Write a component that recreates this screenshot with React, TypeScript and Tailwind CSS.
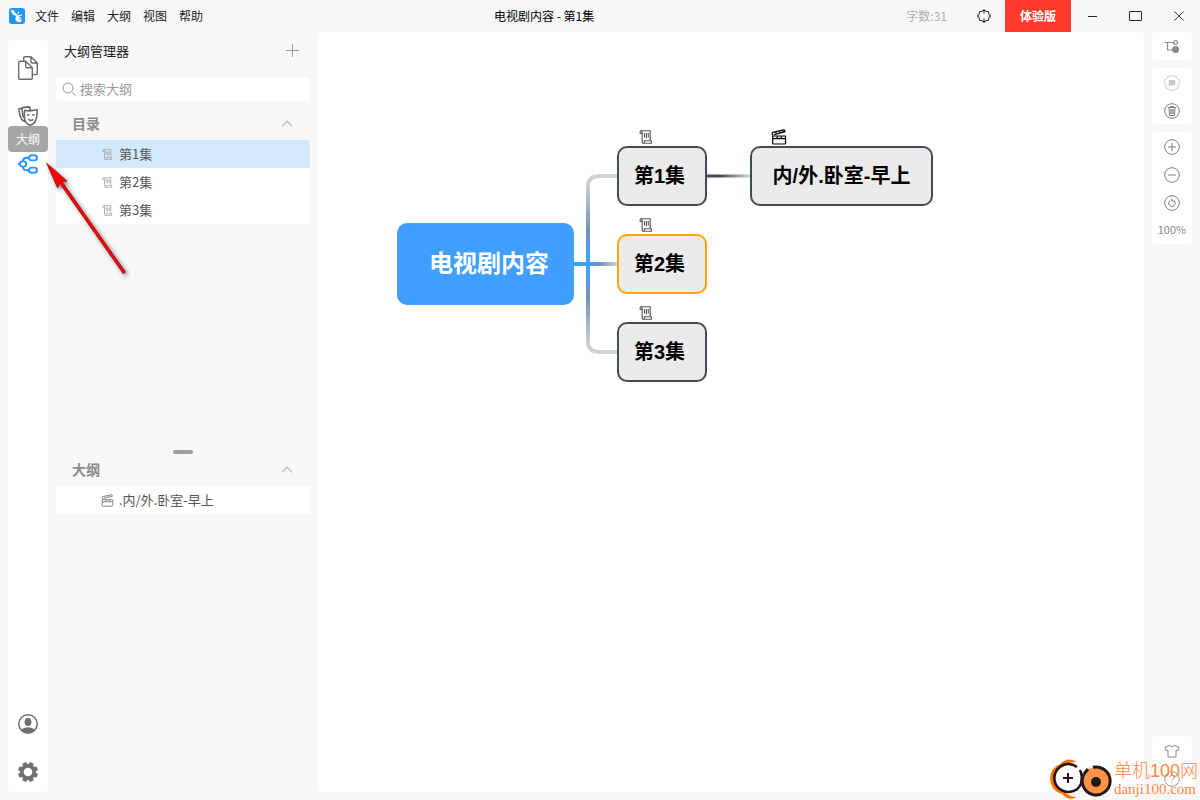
import type { ReactNode } from 'react'

type IconProps = { className?: string }

const EPISODES = ['第1集', '第2集', '第3集']

const MENUS = ['文件', '编辑', '大纲', '视图', '帮助']

function Logo() {
  return (
    <svg viewBox="0 0 16 16" className="h-4 w-4">
      <rect width="16" height="16" rx="3" fill="#2196f3" />
      <path d="M1.600 2 5 2.600 6 4.200 8.200 7.200 7 8 3.500 6.300Z" fill="#fff" />
      <path d="M9.400 3c1 .8.6 2-.4 3L8.200 7 7.600 6.400 8.800 5Z" fill="#fff" />
      <path d="M13.200 6.200c.2 1.400-1.200 1.800-3 1.900l-1.600.1.600-1Z" fill="#fff" />
      <path d="M7.400 7c2.400.8 5.300 2.800 5.200 5.200-.2 2.200-3.800 2.400-5.400.8C5.600 11.400 6.800 9 7.400 7Z" fill="#fff" />
      <path d="M9.800 9.400c1 .8 1.400 1.600 1.200 2.600" stroke="#2196f3" strokeWidth=".6" fill="none" />
    </svg>
  )
}

function ScrollIcon({ className }: IconProps) {
  return (
    <svg viewBox="0 0 14 14" className={className} fill="none" stroke="currentColor" strokeWidth="1.100">
      <path d="M3.200 3.500H1.200V1.500Q1.200.8 2 .8H11.200V10.500" />
      <path d="M2 .8Q3.200 1 3.200 2.500V12.200Q3.200 13.200 4.200 13.200H12.400V10.700H5.300V12.200Q5.300 13.200 4.200 13.200" />
      <path d="M5.500 3v4.500M7.400 3v5.500M9.300 3v4.500" />
    </svg>
  )
}

function SceneIcon({ className }: IconProps) {
  return (
    <svg viewBox="0 0 16 16" className={className} fill="none" stroke="currentColor" strokeWidth="1.200" strokeLinejoin="round">
      <path d="M1.700 7h12.800v7.200q0 .8-.8.8H2.500q-.8 0-.8-.8Z" />
      <path d="M1.700 6.500 1.200 4.200q-.1-.6.5-.8L12.800.9q.8-.1.900.5l.3 1.300-11 2.900M2 9.600h12.300" />
      <path d="m4.600 3 .8 1.500M8.200 2.200 9 3.600M11.500 1.500l.8 1.400M5.500 9.400 7 7.300M9.500 9.400 11 7.300" />
    </svg>
  )
}

function FilesIcon() {
  return (
    <svg viewBox="0 0 20 24" className="h-6 w-5" fill="none" stroke="#6b6b6b" strokeWidth="1.400" strokeLinejoin="round">
      <path d="M5.700 5V1.700Q5.700.7 6.700.7H13L19.300 7V17.500q0 1-1 1h-3M13 .7V6q0 1 1 1h5.300" />
      <path d="M1.700 5.300h6l6.600 6.500v10.500q0 1-1 1H1.700q-1 0-1-1v-16q0-1 1-1ZM7.700 5.300v5.500q0 1 1 1h5.600" />
    </svg>
  )
}

function MaskIcon() {
  return (
    <svg viewBox="0 0 20 20" className="h-5 w-5" fill="none" stroke="#6b6b6b" strokeWidth="1.600" strokeLinejoin="round" strokeLinecap="round">
      <path d="M6.800 4.200Q10 5.200 13 4.600 16.500 4.400 19.200 3.800 19.200 11 17.500 15q-2 3.600-5.500 4.200Q8.300 18.300 6.800 14 5.900 9 6.800 4.200Z" />
      <path d="M12.400 4.200 11.500.9Q6 .8.900 3 1.400 9 3.400 13q1.500 2.200 4 2.600M4 3.200l1.200 8" />
      <path d="M9.600 9h1.500M14.600 9h1.500M10.600 13.500q2 1.600 4.400.2" />
    </svg>
  )
}

function BranchIcon() {
  return (
    <svg viewBox="0 0 20 20" className="h-5 w-5" fill="none" stroke="#2b94f0" strokeWidth="1.900">
      <rect x="11" y="1.200" width="8" height="5.200" rx="2.600" />
      <rect x="11" y="13.600" width="8" height="5.200" rx="2.600" />
      <rect x="1.800" y="7.400" width="6.400" height="5.200" rx="2.600" />
      <path d="M0 10h2M5 7.400Q5 3.800 8.500 3.800H11M5 12.600Q5 16.200 8.500 16.200H11" />
    </svg>
  )
}

function UserIcon() {
  return (
    <svg viewBox="0 0 20 20" className="h-5 w-5">
      <circle cx="10" cy="10" r="9.200" fill="none" stroke="#707070" strokeWidth="1.500" />
      <ellipse cx="10" cy="8" rx="3.400" ry="4" fill="#707070" />
      <path d="M3.200 16Q5.500 13.200 10 13.200t6.800 2.800Q14 19.200 10 19.200T3.200 16Z" fill="#707070" />
    </svg>
  )
}

function GearIcon() {
  return (
    <svg viewBox="0 0 20 20" className="h-5 w-5" fill="#707070">
      {[0, 45, 90, 135].map(a => (
        <path key={a} transform={`rotate(${a + 22.5} 10 10)`} d="M7.400 3 8.200 0h3.600l.8 3v14l-.8 3H8.200l-.8-3Z" />
      ))}
      <circle cx="10" cy="10" r="8" />
      <circle cx="10" cy="10" r="4.300" fill="#fff" />
    </svg>
  )
}

function Chevron() {
  return (
    <svg viewBox="0 0 12 7" className="h-[7px] w-3" fill="none" stroke="#b8b8b8" strokeWidth="1.200">
      <path d="M1 6.300 6 1l5 5.300" />
    </svg>
  )
}

function RoundIcon({ children, color = '#7c7c7c' }: { children: ReactNode; color?: string }) {
  return (
    <svg viewBox="0 0 16 16" className="h-4 w-4" fill="none" stroke={color} strokeWidth="1">
      <circle cx="8" cy="8" r="7.300" />
      {children}
    </svg>
  )
}

function ToolButton({ label, children }: { label: string; children: ReactNode }) {
  return (
    <button aria-label={label} className="flex h-7 w-full items-center justify-center pt-[2px]">
      {children}
    </button>
  )
}

function SectionHead({ title }: { title: string }) {
  return (
    <button className="flex h-8 w-full items-center justify-between pr-[17px] pb-[2px] pl-4 text-sm font-bold text-[#8b8b8b]">
      {title}
      <Chevron />
    </button>
  )
}

function MindMap() {
  return (
    <div className="font-['Liberation_Sans','Noto_Sans_CJK_SC',sans-serif] font-bold text-black">
      <svg className="absolute top-0 left-0 h-[400px] w-[640px]" fill="none">
        <defs>
          <linearGradient id="trunk" gradientUnits="userSpaceOnUse" x1="0" y1="144" x2="0" y2="320">
            <stop offset="0" stopColor="#d3d3d3" />
            <stop offset=".12" stopColor="#b8c2cc" />
            <stop offset=".3" stopColor="#7095bd" />
            <stop offset=".5" stopColor="#409eff" />
            <stop offset=".7" stopColor="#7095bd" />
            <stop offset=".88" stopColor="#b8c2cc" />
            <stop offset="1" stopColor="#d3d3d3" />
          </linearGradient>
          <linearGradient id="middle" gradientUnits="userSpaceOnUse" x1="270" y1="0" x2="299" y2="0">
            <stop offset="0" stopColor="#409eff" />
            <stop offset=".4" stopColor="#6a90bb" />
            <stop offset="1" stopColor="#d3d3d3" />
          </linearGradient>
          <linearGradient id="leaf" gradientUnits="userSpaceOnUse" x1="389" y1="0" x2="432" y2="0">
            <stop offset=".3" stopColor="#434b57" />
            <stop offset="1" stopColor="#d3d3d3" />
          </linearGradient>
        </defs>
        <path d="M299 144H281Q270 144 270 155V309Q270 320 281 320H299" stroke="url(#trunk)" strokeWidth="4" />
        <path d="M256 232H299" stroke="url(#middle)" strokeWidth="4" />
        <path d="M389 144H432" stroke="url(#leaf)" strokeWidth="3" />
      </svg>
      <div className="absolute top-[191px] left-[79px] flex h-[82px] w-[177px] items-center rounded-[10px] bg-[#409eff] pl-8 text-2xl text-white">
        电视剧内容
      </div>
      <div className="absolute top-[98px] left-[299px] flex flex-col gap-3">
        {EPISODES.map((name, i) => (
          <div key={name} className="flex flex-col gap-[2px]">
            <ScrollIcon className="ml-[22px] h-[14px] w-[14px] text-[#555]" />
            <div
              className={`flex h-[60px] w-[90px] items-center rounded-[10px] border-2 bg-[#ebebeb] pl-[15px] text-xl ${i === 1 ? 'border-[#ffa500]' : 'border-[#434b57]'}`}
            >
              {name}
            </div>
          </div>
        ))}
      </div>
      <div className="absolute top-[97px] left-[432px] flex flex-col gap-px">
        <SceneIcon className="ml-[21px] h-4 w-4" />
        <div className="flex h-[60px] w-[183px] items-center justify-center rounded-[10px] border-2 border-[#434b57] bg-[#ebebeb] text-xl whitespace-nowrap">
          内/外.卧室-早上
        </div>
      </div>
    </div>
  )
}

function Watermark() {
  return (
    <div className="pointer-events-none absolute right-[2px] bottom-0 flex items-center text-[#ff8844]">
      <svg viewBox="0 0 64 42" className="h-[42px] w-16" fill="none">
        <path d="M27 4Q18-2 10 6 0 10 0 21 1 33 12 36 18 43 27 39.500 20 39 15 34 4 30 4 20.500 5 11 13 9 18 3.500 27 4Z" fill="#ff7300" />
        <path d="M27 9A14 14 0 1 0 31 26" stroke="#231815" strokeWidth="2.600" />
        <path d="M30 12Q33 18 31 26" stroke="#231815" strokeWidth="2.600" />
        <path d="M18 15v10M13 20h10" stroke="#231815" strokeWidth="2" />
        <circle cx="46" cy="23" r="14" fill="#ff9248" />
        <path d="M43 9.300A14 14 0 1 1 34 16" stroke="#231815" strokeWidth="3" />
        <path d="M34 16 38 11" stroke="#231815" strokeWidth="3" />
        <circle cx="46" cy="24" r="5" fill="#231815" />
      </svg>
      <div className="flex flex-col font-['Liberation_Sans','Noto_Sans_CJK_SC',sans-serif]">
        <span className="text-lg leading-5 font-light">单机100网</span>
        <span className="font-['Liberation_Serif',serif] text-[15px] leading-4">danji100.com</span>
      </div>
    </div>
  )
}

export default function App() {
  return (
    <div className="relative flex h-screen flex-col overflow-hidden bg-[#f7f7f7] font-['Noto_Sans_CJK_SC',sans-serif] text-[#222]">
      <header className="grid h-8 shrink-0 grid-cols-[1fr_auto_1fr] items-center text-xs">
        <nav className="flex items-center gap-3 pl-[9px]">
          <div className="-mr-[2px]">
            <Logo />
          </div>
          {MENUS.map(m => (
            <button key={m}>{m}</button>
          ))}
        </nav>
        <h1 className="-ml-[106px] text-black">电视剧内容 - 第1集</h1>
        <div className="flex h-8 items-center justify-end">
          <span className="mr-[30px] text-[#b0b0b0]">字数:31</span>
          <button aria-label="同步" className="mr-[14px]">
            <svg viewBox="0 0 14 14" className="h-[14px] w-[14px]" fill="none" stroke="#333" strokeWidth="1.100">
              <path d="M5 2.500H3.300Q2.300 2.500 2.300 3.500V5L.6 7l1.700 2v1.500q0 1 1 1H5M9 2.500h1.700q1 0 1 1V5l1.700 2-1.700 2v1.500q0 1-1 1H9" />
              <path d="M7 .5V4.500M5.200 2.400 7 .6l1.800 1.800M7 13.500v-4M5.200 11.600 7 13.400l1.800-1.800" />
            </svg>
          </button>
          <button className="h-8 w-[66px] bg-[#ff3b30] font-bold text-white">体验版</button>
          <button aria-label="最小化" className="flex h-8 w-[43px] items-center justify-center">
            <svg viewBox="0 0 14 14" className="h-[14px] w-[14px]" stroke="#222">
              <path d="M2 7.500h9" />
            </svg>
          </button>
          <button aria-label="最大化" className="flex h-8 w-[43px] items-center justify-center">
            <svg viewBox="0 0 14 12" className="h-3 w-[14px]" fill="none" stroke="#222">
              <rect x=".5" y="1.500" width="12" height="9" rx=".5" />
            </svg>
          </button>
          <button aria-label="关闭" className="flex h-8 w-[43px] items-center justify-center">
            <svg viewBox="0 0 12 12" className="h-3 w-3" stroke="#333">
              <path d="m1.500 1.500 9 9M10.500 1.500l-9 9" />
            </svg>
          </button>
        </div>
      </header>

      <div className="flex min-h-0 flex-1 gap-2 px-2 pb-2">
        <nav className="relative mt-2 flex w-10 shrink-0 flex-col items-center rounded bg-white pt-1 pb-2">
          <button aria-label="文件" className="flex h-12 items-center">
            <FilesIcon />
          </button>
          <button aria-label="角色" className="flex h-12 items-center">
            <MaskIcon />
          </button>
          <button aria-label="大纲导图" className="flex h-12 items-center">
            <BranchIcon />
          </button>
          <button aria-label="账号" className="mt-auto flex h-10 items-center">
            <UserIcon />
          </button>
          <button aria-label="设置" className="mt-4 flex h-6 items-center">
            <GearIcon />
          </button>
          <div className="absolute top-[86px] flex h-[26px] w-10 items-center justify-center rounded bg-[#a6a6a6] text-xs text-white">大纲</div>
          <svg viewBox="0 0 90 120" className="pointer-events-none absolute top-[120px] left-8 z-10 h-[120px] w-[90px] drop-shadow-[2px_2px_2px_rgba(0,0,0,0.5)]">
            <path d="M84.500 113 22 24" stroke="#7b1010" strokeWidth="3.400" />
            <path d="M6.500 3 27 21 21.500 22 17.500 28Z" fill="red" stroke="#7b1010" strokeWidth=".6" />
            <path d="M84.500 113 18 18" stroke="red" strokeWidth="2.400" />
          </svg>
        </nav>

        <aside className="flex w-[254px] shrink-0 flex-col text-[13px] text-[#555]">
          <div className="flex h-[45px] items-center justify-between pr-[11px] pb-2 pl-2">
            <h2 className="text-[#222]">大纲管理器</h2>
            <button aria-label="新建">
              <svg viewBox="0 0 13 13" className="h-[13px] w-[13px]" stroke="#999">
                <path d="M6.500 0v13M0 6.500h13" />
              </svg>
            </button>
          </div>
          <label className="flex h-6 items-center gap-1 rounded bg-white px-[6px]">
            <svg viewBox="0 0 14 14" className="h-[14px] w-[14px] shrink-0" fill="none" stroke="#999">
              <circle cx="6" cy="6" r="5" />
              <path d="m9.500 9.500 4 4" />
            </svg>
            <input type="text" aria-label="搜索大纲" placeholder="搜索大纲" className="w-full bg-transparent outline-none placeholder:text-[#999]" />
          </label>
          <div className="mt-[7px]">
            <SectionHead title="目录" />
          </div>
          <ul>
            {EPISODES.map((name, i) => (
              <li key={name}>
                <button className={`flex h-7 w-full items-center gap-[6px] pl-[46px] ${i === 0 ? 'bg-[#d3e9fc]' : 'bg-white'}`}>
                  <ScrollIcon className="h-[11px] w-[11px] text-[#aaa]" />
                  {name}
                </button>
              </li>
            ))}
          </ul>
          <div className="mt-[226px] h-1 w-5 self-center rounded-full bg-[#9e9e9e]" />
          <SectionHead title="大纲" />
          <ul>
            <li>
              <button className="flex h-7 w-full items-center gap-[5px] bg-white pl-[45px]">
                <SceneIcon className="h-[13px] w-[13px] text-[#888]" />
                .内/外.卧室-早上
              </button>
            </li>
          </ul>
        </aside>

        <main className="relative min-w-0 flex-1 overflow-hidden rounded bg-white">
          <MindMap />
        </main>

        <aside className="flex w-10 shrink-0 flex-col gap-2">
          <div className="rounded bg-white">
            <ToolButton label="布局">
              <svg viewBox="0 0 16 16" className="h-4 w-4" fill="none" stroke="#8a8a8a" strokeWidth="1.200">
                <path d="M.5 3.500h9M3.500 3.500v7.500H9" />
                <circle cx="11.500" cy="3.500" r="2" />
                <circle cx="11.500" cy="10.500" r="3.500" fill="#8a8a8a" stroke="none" />
              </svg>
            </ToolButton>
          </div>
          <div className="rounded bg-white">
            <ToolButton label="备注">
              <RoundIcon color="#c8c8c8">
                <path d="M4.800 5h6.400v5.200H6.500l-1.700 1.200Z" fill="#c8c8c8" stroke="none" />
              </RoundIcon>
            </ToolButton>
            <ToolButton label="删除">
              <RoundIcon>
                <path d="M4 4.500h8M6.500 4.500v-1h3v1M5 5l.5 7.500h5L11 5M6.800 6v5M8 6v5M9.200 6v5" />
              </RoundIcon>
            </ToolButton>
          </div>
          <div className="rounded bg-white">
            <ToolButton label="放大">
              <RoundIcon>
                <path d="M4 8h8M8 4v8" />
              </RoundIcon>
            </ToolButton>
            <ToolButton label="缩小">
              <RoundIcon>
                <path d="M4 8h8" />
              </RoundIcon>
            </ToolButton>
            <ToolButton label="重置">
              <RoundIcon>
                <path d="M6.200 5.400A3.300 3.300 0 1 0 10.200 5.800M7.800 3.500V6H10.500" />
              </RoundIcon>
            </ToolButton>
            <div className="flex h-7 items-center justify-center pb-[2px] text-[11px] text-[#888]">100%</div>
          </div>
          <div className="mt-auto rounded bg-white">
            <ToolButton label="主题">
              <svg viewBox="0 0 16 16" className="h-4 w-4" fill="none" stroke="#888" strokeLinejoin="round">
                <path d="M5.500 2.500Q8 4.800 10.500 2.500L15 4.500 14 7.800l-2-.5V14H4V7.300l-2 .5L1 4.500Z" />
              </svg>
            </ToolButton>
            <ToolButton label="帮助">
              <RoundIcon color="#999">
                <path d="M5.800 6.300Q6 4.300 8 4.300t2.200 1.900Q10.200 7.300 8.900 8 8 8.500 8 9.700M8 11v1.200" />
              </RoundIcon>
            </ToolButton>
          </div>
        </aside>
      </div>
      <Watermark />
    </div>
  )
}
